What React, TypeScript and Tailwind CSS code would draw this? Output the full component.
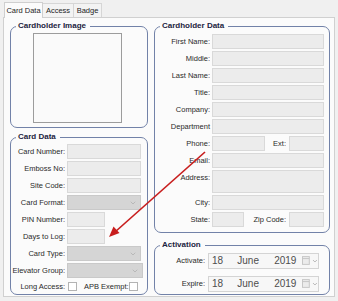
import { ChevronDown } from 'lucide-react';
import type { ReactNode } from 'react';

const label = "text-right text-[7.5px] leading-[15px] text-[#2a2a2a] whitespace-nowrap";
const box = "h-[15px] border border-[#d9d9d9] bg-[#ececec]";

function Select({ className }: { className: string }) {
    return (
        <div className={`flex h-[15px] items-center justify-end border border-[#c9c9c9] bg-[#d5d5d5] pr-[3px] ${className}`}>
            <ChevronDown size={8} strokeWidth={1.5} className="text-[#9a9a9a]" />
        </div>
    );
}

function Group({ title, className, children }: { title: string; className: string; children: ReactNode }) {
    return (
        <fieldset className={`rounded-[7px] border border-[#7282a8] ${className}`}>
            <legend className="ml-[5px] px-[2px] pr-[4px] text-[8px] font-bold leading-[10px] text-[#1b2340]">{title}</legend>
            {children}
        </fieldset>
    );
}

function LeftRow({ text, children }: { text: string; children: ReactNode }) {
    return (
        <div className="flex h-[15px] items-center">
            <span className={`w-[54px] ${label}`}>{text}</span>
            <div className="ml-[2px]">{children}</div>
        </div>
    );
}

function RightRow({ text, children, tall }: { text: string; children: ReactNode; tall?: boolean }) {
    return (
        <div className={`flex ${tall ? 'h-[23px] items-start' : 'h-[15px] items-center'}`}>
            <span className={`w-[55px] ${label}`}>{text}</span>
            <div className="ml-[2px] flex">{children}</div>
        </div>
    );
}

function DateField({ text }: { text: string }) {
    return (
        <div className="flex h-[15px] items-center">
            <span className={`w-[50px] ${label}`}>{text}</span>
            <div className="ml-[3px] flex h-[16px] w-[111px] items-center border border-[#d4d4d4] bg-[#f7f7f7] text-[10px] leading-none text-[#4d4d4d]">
                <span className="w-[29px] pl-[3px]">18</span>
                <span className="w-[38px]">June</span>
                <span className="w-[28px]">2019</span>
                <svg width="8" height="9" viewBox="0 0 8 9" className="ml-[1px]">
                    <rect x="0.5" y="0.5" width="7" height="8" fill="#ececec" stroke="#c6c6c6" />
                    <line x1="0.5" y1="2.5" x2="7.5" y2="2.5" stroke="#c6c6c6" />
                </svg>
                <svg width="6" height="4" viewBox="0 0 6 4" className="ml-[2px]">
                    <path d="M1 1 L3 3 L5 1" fill="none" stroke="#b5b5b5" strokeWidth="1" />
                </svg>
            </div>
        </div>
    );
}

export default function App() {
    return (
        <div className="relative h-[301px] w-[338px] overflow-hidden bg-[#f0f0f0] font-['Liberation_Sans',Arial,sans-serif]">
            <div className="flex h-[17px] items-end pl-[4px]">
                <div className="relative z-10 -mb-px flex h-[16px] w-[39px] items-center justify-center border border-b-0 border-[#cfcfcf] bg-[#fbfbfb] text-[7.5px] text-[#1e1e1e]">
                    Card Data
                </div>
                <div className="flex h-[14px] w-[31px] items-center justify-center border border-l-0 border-b-0 border-[#d6d6d6] bg-[#f3f3f3] text-[7.5px] text-[#1e1e1e]">
                    Access
                </div>
                <div className="flex h-[14px] w-[28px] items-center justify-center border border-l-0 border-b-0 border-[#d6d6d6] bg-[#f3f3f3] text-[7.5px] text-[#1e1e1e]">
                    Badge
                </div>
            </div>

            <div className="ml-[3px] flex h-[280px] w-[332px] gap-[6px] border border-[#d0d0d0] bg-[#fbfbfb] pl-[6px] pt-[3px]">
                <div className="flex w-[138px] flex-col gap-[4px]">
                    <Group title="Cardholder Image" className="h-[107px]">
                        <div className="ml-[22px] mt-[2px] h-[90px] w-[89px] border border-[#9c9c9c] bg-[#fafafa]" />
                    </Group>

                    <Group title="Card Data" className="h-[163px]">
                        <div className="flex flex-col gap-[2px] pt-[2px]">
                            <LeftRow text="Card Number:"><div className={`${box} w-[74px]`} /></LeftRow>
                            <LeftRow text="Emboss No:"><div className={`${box} w-[74px]`} /></LeftRow>
                            <LeftRow text="Site Code:"><div className={`${box} w-[74px]`} /></LeftRow>
                            <LeftRow text="Card Format:"><Select className="w-[74px]" /></LeftRow>
                            <LeftRow text="PIN Number:"><div className={`${box} w-[38px]`} /></LeftRow>
                            <LeftRow text="Days to Log:"><div className={`${box} w-[38px]`} /></LeftRow>
                            <LeftRow text="Card Type:"><Select className="w-[74px]" /></LeftRow>
                            <LeftRow text="Elevator Group:"><Select className="w-[76px]" /></LeftRow>
                            <div className="mt-[1px] flex h-[11px] items-center">
                                <span className={`w-[54px] ${label}`}>Long Access:</span>
                                <div className="ml-[3px] h-[9px] w-[9px] border border-[#b3b3b3] bg-white" />
                                <span className={`ml-[7px] w-[41px] ${label}`}>APB Exempt:</span>
                                <div className="ml-[4px] h-[9px] w-[9px] border border-[#b3b3b3] bg-white" />
                            </div>
                        </div>
                    </Group>
                </div>

                <div className="flex w-[176px] flex-col gap-[7px]">
                    <Group title="Cardholder Data" className="h-[212px]">
                        <div className="flex flex-col gap-[2px] pt-[3px]">
                            <RightRow text="First Name:"><div className={`${box} w-[112px]`} /></RightRow>
                            <RightRow text="Middle:"><div className={`${box} w-[112px]`} /></RightRow>
                            <RightRow text="Last Name:"><div className={`${box} w-[112px]`} /></RightRow>
                            <RightRow text="Title:"><div className={`${box} w-[112px]`} /></RightRow>
                            <RightRow text="Company:"><div className={`${box} w-[112px]`} /></RightRow>
                            <RightRow text="Department"><div className={`${box} w-[112px]`} /></RightRow>
                            <RightRow text="Phone:">
                                <div className={`${box} w-[53px]`} />
                                <span className={`w-[21px] ${label}`}>Ext:</span>
                                <div className={`${box} ml-[3px] w-[35px]`} />
                            </RightRow>
                            <RightRow text="Email:"><div className={`${box} w-[112px]`} /></RightRow>
                            <RightRow text="Address:" tall><div className="h-[23px] w-[112px] border border-[#d9d9d9] bg-[#ececec]" /></RightRow>
                            <RightRow text="City:"><div className={`${box} w-[112px]`} /></RightRow>
                            <RightRow text="State:">
                                <div className={`${box} w-[32px]`} />
                                <span className={`w-[42px] ${label}`}>Zip Code:</span>
                                <div className={`${box} ml-[3px] w-[35px]`} />
                            </RightRow>
                        </div>
                    </Group>

                    <Group title="Activation" className="h-[55px]">
                        <div className="flex flex-col gap-[8px] pt-[3px]">
                            <DateField text="Activate:" />
                            <DateField text="Expire:" />
                        </div>
                    </Group>
                </div>
            </div>

            {/* annotation arrow drawn over the form */}
            <svg className="pointer-events-none absolute inset-0" width="338" height="301" viewBox="0 0 338 301">
                <line x1="205" y1="152" x2="115" y2="232" stroke="#c81e1e" strokeWidth="1.6" />
                <polygon points="109,237 113.5,226.5 119.5,233" fill="#c81e1e" />
            </svg>
        </div>
    );
}
